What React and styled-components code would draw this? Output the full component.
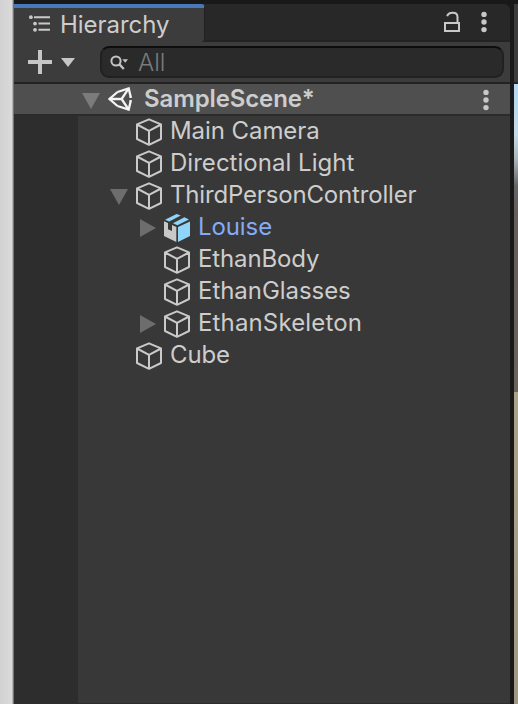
import React from "react";
import styled, { createGlobalStyle } from "styled-components";

const GlobalStyle = createGlobalStyle`
  * { box-sizing: border-box; }
  body { margin: 0; background: #191919; }
`;

const Screen = styled.div`
  display: flex;
  width: 518px;
  height: 704px;
  overflow: hidden;
  background: #191919;
  font-family: Inter, "Liberation Sans", sans-serif;
  font-size: 24px;
  font-weight: 400;
  color: #cdcdcd;
`;

const DesktopEdge = styled.div`
  width: 14px;
  flex: none;
  background: linear-gradient(90deg, #d2d2d2 0, #dadada 12px, #8c8c8c 13px, #5c5c5c 14px);
`;

const Panel = styled.main`
  display: flex;
  flex-direction: column;
  width: 496px;
  flex: none;
  padding-top: 4px;
`;

const TabBar = styled.header`
  display: flex;
  height: 38px;
  flex: none;
  background: #282828;
  border-bottom: 2px solid #232323;
  border-radius: 0 6px 0 0;
`;

const Tab = styled.div`
  display: flex;
  align-items: center;
  width: 191px;
  height: 38px;
  padding: 0 0 2px 15px;
  background: #3c3c3c;
  border-top: 4px solid #4a79bb;
  border-right: 1px solid #222;
  border-radius: 0 4px 4px 0;
`;

const TabTitle = styled.span`
  margin-left: 9px;
  padding-top: 2px;
  line-height: 32px;
  letter-spacing: -0.03px;
`;

const TabActions = styled.div`
  display: flex;
  align-items: flex-start;
  margin-left: auto;
  padding: 7px 18px 0 0;
  gap: 16px;
`;

const Toolbar = styled.div`
  display: flex;
  align-items: center;
  height: 42px;
  flex: none;
  padding: 0 6px 0 14px;
  background: #3c3c3c;
  border-bottom: 2px solid #232323;
`;

const Search = styled.div`
  display: flex;
  align-items: center;
  width: 404px;
  height: 32px;
  margin-left: auto;
  padding: 1px 0 0 8px;
  background: #2a2a2a;
  border: 2px solid #212121;
  border-top-color: #0d0d0d;
  border-radius: 9px;
`;

const Placeholder = styled.span`
  margin-left: 8px;
  line-height: 28px;
  font-weight: 300;
  color: #7b7b7b;
`;

const SceneRow = styled.div`
  display: flex;
  align-items: center;
  height: 32px;
  flex: none;
  padding: 1px 16px 0 68px;
  background: #4f4f4f;
  border-bottom: 2px solid #2b2b2b;
`;

const SceneName = styled.span`
  margin-left: 12px;
  margin-right: auto;
  font-weight: 600;
  line-height: 28px;
  padding-bottom: 2px;
  letter-spacing: -0.12px;
`;

const Body = styled.div`
  display: flex;
  flex: 1;
  background: #383838;
  border-bottom: 1px solid #302c2e;
`;

const Gutter = styled.div`
  width: 64px;
  background: #2d2d2d;
`;

const Tree = styled.ul`
  list-style: none;
  margin: 0;
  padding: 0;
`;

const Item = styled.li`
  display: flex;
  align-items: center;
  height: 32px;
  padding-left: ${(p) => 32 + p.$depth * 28}px;
  color: ${(p) => (p.$prefab ? "#85abf4" : "#cdcdcd")};
`;

const FoldSlot = styled.span`
  display: flex;
  width: 26px;
  flex: none;
`;

const Label = styled.span`
  margin-left: 8px;
  line-height: 28px;
  padding-bottom: 2px;
  letter-spacing: ${(p) => p.$tracking}px;
`;

const Viewport = styled.aside`
  width: 4px;
  margin: 4px 0 0 4px;
  background: linear-gradient(
    180deg,
    #3c3c3c 0, #3c3c3c 78px, #232323 78px, #232323 80px,
    #b2d8f5 80px, #c4dce8 130px, #a9b6bc 155px, #66666a 182px,
    #665e5b 210px, #6a625d 388px, #aaa288 388px, #a09882 100%
  );
`;

const Svg = styled.svg`
  display: block;
  flex: none;
`;

const ListIcon = () => (
  <Svg width="22" height="18" viewBox="0 0 22 18" fill="#c9c9c9">
    <circle cx="1.9" cy="2.2" r="1.9" />
    <circle cx="6" cy="8.6" r="1.9" />
    <circle cx="6" cy="14.8" r="1.9" />
    <path d="M5 1.2h16v2H5zM9.5 7.6H21v2H9.5zM9.5 13.8H21v2H9.5z" />
  </Svg>
);

const LockIcon = () => (
  <Svg width="16" height="22" viewBox="0 0 16 22" fill="none" stroke="#c8c8c8" strokeWidth="2">
    <path d="M1 12h14v8H1zM3.2 5.2C4.5 0.8 13.5 0.4 13.5 6v5.5" />
  </Svg>
);

const Dots = () => (
  <Svg width="16" height="22" viewBox="0 0 16 22" fill="#c8c8c8">
    <circle cx="8" cy="3.4" r="2.7" />
    <circle cx="8" cy="11" r="2.7" />
    <circle cx="8" cy="18.6" r="2.7" />
  </Svg>
);

const AddIcon = () => (
  <Svg width="48" height="24" viewBox="0 0 48 24" fill="#c6c6c6">
    <path d="M10 0h4v10h10v4H14v10h-4V14H0v-4h10zM33 8h14l-7 9z" />
  </Svg>
);

const SearchIcon = () => (
  <Svg width="20" height="16" viewBox="0 0 20 16" fill="none" stroke="#c4c4c4" strokeWidth="2">
    <circle cx="6" cy="6" r="4.6" />
    <path d="M9.2 9.2l4.6 4.8" strokeWidth="2.4" />
    <path d="M12.4 4.2H18L15.2 7.8z" fill="#c4c4c4" stroke="none" />
  </Svg>
);

const FoldIcon = ({ open, light }) =>
  open ? (
    <Svg width="18" height="18" viewBox="0 0 18 18">
      <path d="M0 2h18L9 18z" fill={light ? "#7b7b7b" : "#6d6d6d"} />
    </Svg>
  ) : (
    <Svg width="18" height="18" viewBox="0 0 18 18">
      <path d="M2 0l16 9L2 18z" fill="#6d6d6d" />
    </Svg>
  );

const SceneIconSlot = styled.span`
  margin-left: 8px;
  padding-bottom: 2px;
`;

const UnityIcon = () => (
  <Svg width="24" height="24" viewBox="0 0 24 24" fill="none" stroke="#f4f4f4" strokeWidth="2.3">
    <path d="M9.5 5L20.7 1.4L22.6 9.5M22.6 14.5L20.7 22.6L9.5 19M9.5 5L1.5 12L9.5 19" />
    <path d="M1.5 12H13.6L20.7 1.4M13.6 12L20.7 22.6M22.6 9V11M22.6 13V15" />
  </Svg>
);

const CubeIcon = () => (
  <Svg width="26" height="28" viewBox="0 0 26 28" fill="none" stroke="#cacaca" strokeWidth="2" strokeLinejoin="round">
    <path d="M13 1.3L25 6.3V21L13 26.8L1 21V6.3zM1 6.5L13 12.8L25 6.5M13 12.8V26.8" />
  </Svg>
);

const PrefabIcon = () => (
  <Svg width="26" height="28" viewBox="0 0 26 28">
    <path d="M0 7.2L4 9v6.2l4 1.8V11l4.3 2V28L0 22z" fill="#c8c8c8" />
    <path d="M14 13L26 7.4V22L14 28z" fill="#8fd5fa" />
    <path d="M1 5.7L12.6 0L16.8 1.6L5.2 7.6zM9 9.2L20.4 3.3L25 5.5L13.4 11.2z" fill="#8fd5fa" />
  </Svg>
);

const items = [
  { name: "Main Camera", depth: 0, tracking: -0.07 },
  { name: "Directional Light", depth: 0, tracking: 0.03 },
  { name: "ThirdPersonController", depth: 0, fold: "open", tracking: -0.17 },
  { name: "Louise", depth: 1, fold: "closed", prefab: true, tracking: -0.1 },
  { name: "EthanBody", depth: 1, tracking: -0.13 },
  { name: "EthanGlasses", depth: 1, tracking: -0.05 },
  { name: "EthanSkeleton", depth: 1, fold: "closed", tracking: 0.15 },
  { name: "Cube", depth: 0, tracking: -0.1 },
];

export default function App() {
  return (
    <Screen>
      <GlobalStyle />
      <DesktopEdge />
      <Panel>
        <TabBar>
          <Tab>
            <ListIcon />
            <TabTitle>Hierarchy</TabTitle>
          </Tab>
          <TabActions>
            <LockIcon />
            <Dots />
          </TabActions>
        </TabBar>
        <Toolbar>
          <AddIcon />
          <Search>
            <SearchIcon />
            <Placeholder>All</Placeholder>
          </Search>
        </Toolbar>
        <SceneRow>
          <FoldIcon open light />
          <SceneIconSlot>
            <UnityIcon />
          </SceneIconSlot>
          <SceneName>SampleScene*</SceneName>
          <Dots />
        </SceneRow>
        <Body>
          <Gutter />
          <Tree>
            {items.map(({ name, depth, fold, prefab, tracking }) => (
              <Item key={name} $depth={depth} $prefab={prefab}>
                <FoldSlot>{fold && <FoldIcon open={fold === "open"} />}</FoldSlot>
                {prefab ? <PrefabIcon /> : <CubeIcon />}
                <Label $tracking={tracking}>{name}</Label>
              </Item>
            ))}
          </Tree>
        </Body>
      </Panel>
      <Viewport />
    </Screen>
  );
}
